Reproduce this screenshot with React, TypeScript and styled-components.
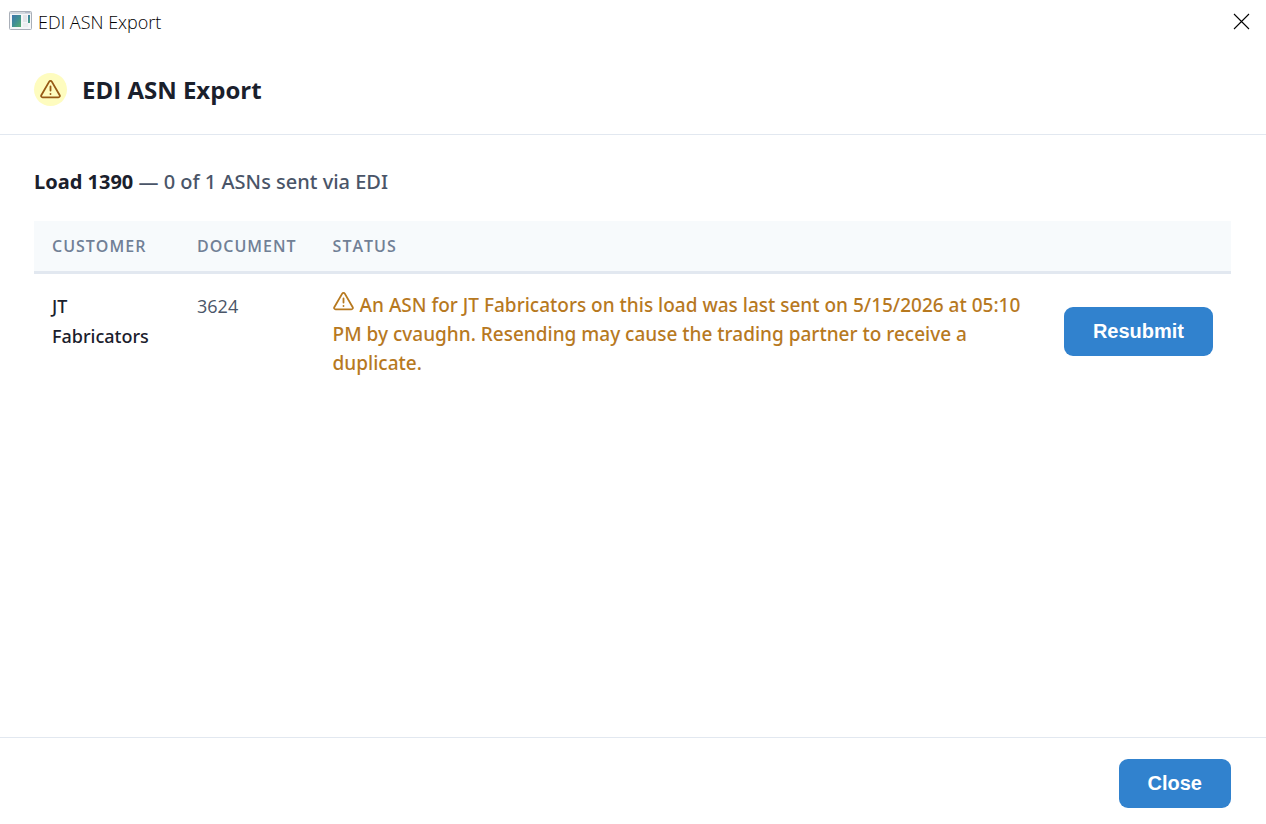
import React from "react";
import styled, { createGlobalStyle } from "styled-components";

const GlobalStyle = createGlobalStyle`
  * { box-sizing: border-box; }
  body {
    margin: 0;
    background: #ffffff;
    color: #1a202c;
    font-family: "Open Sans", "Noto Sans", sans-serif;
    font-size: 19px;
    line-height: 30px;
  }
`;

const Window = styled.div`
  display: flex;
  flex-direction: column;
  min-height: 100vh;
`;

const TitleBar = styled.header`
  display: flex;
  align-items: flex-start;
  justify-content: space-between;
  height: 45px;
  padding: 7px 16px 0 8px;
`;

const WindowTitle = styled.div`
  display: flex;
  align-items: flex-start;
  gap: 5px;
  color: #000000;
  font-size: 18px;
  font-weight: 300;

  svg { margin-top: 4px; }
`;

const WindowClose = styled.button`
  display: flex;
  padding: 6px 0;
  border: 0;
  background: none;
  color: #000000;
  cursor: pointer;
`;

const DialogHeader = styled.div`
  display: flex;
  align-items: center;
  gap: 15px;
  padding: 28px 34px;
  border-bottom: 1px solid #e2e8f0;
`;

const WarningBadge = styled.span`
  display: flex;
  align-items: center;
  justify-content: center;
  width: 33px;
  height: 33px;
  border-radius: 50%;
  background: #fefcbf;
  color: #975a16;
`;

const Heading = styled.h1`
  margin: 0;
  font-size: 24px;
  font-weight: 700;
  line-height: 33px;
`;

const Content = styled.main`
  flex: 1;
  padding: 32px 35px 32px 34px;
`;

const Summary = styled.p`
  margin: 0 0 24px;
  color: #4a5568;
  font-family: "Noto Sans", sans-serif;
  font-size: 20px;
  font-weight: 500;

  strong {
    color: #1a202c;
    font-weight: 700;
  }
`;

const AsnTable = styled.table`
  width: 100%;
  border-collapse: separate;
  border-spacing: 0;
`;

const HeadCell = styled.th<{ $width?: number }>`
  width: ${(p) => (p.$width ? `${p.$width}px` : "auto")};
  padding: 10px 18px;
  border-bottom: 3px solid #e2e8f0;
  background: #f7fafc;
  color: #718096;
  font-size: 16px;
  font-weight: 600;
  letter-spacing: 1px;
  text-align: left;
  text-transform: uppercase;
`;

const Cell = styled.td`
  padding: 17px 18px 10px;
  vertical-align: top;
`;

const CustomerCell = styled(Cell)`
  font-family: "Noto Sans", sans-serif;
  font-weight: 500;
  font-size: 18px;
`;

const DocumentCell = styled(Cell)`
  color: #4a5568;
  font-size: 18px;
`;

const StatusCell = styled(Cell)`
  color: #b7791f;
  font-family: "Noto Sans", sans-serif;
  font-weight: 500;
  line-height: 29px;
`;

const ActionCell = styled(Cell)`
  padding: 10px 18px;
  vertical-align: middle;
`;

const InlineIcon = styled.span`
  display: inline-block;
  height: 24px;
  margin-right: 6px;

  svg { vertical-align: 0; }
`;

const Button = styled.button`
  height: 49px;
  padding: 0 29px;
  border: 0;
  border-radius: 9px;
  background: #3182ce;
  color: #ffffff;
  font-family: "Liberation Sans", Arial, sans-serif;
  font-size: 20px;
  font-weight: 700;
  cursor: pointer;
`;

const Footer = styled.footer`
  display: flex;
  justify-content: flex-end;
  padding: 21px 35px 16px;
  border-top: 1px solid #e2e8f0;
`;

const Warning = () => (
  <svg width="21" height="21" viewBox="0 0 21 21" fill="none" stroke="currentColor" strokeWidth="1.8" strokeLinecap="round" strokeLinejoin="round" aria-hidden="true">
    <path d="M9.2 2.6 1.3 16.2a1.5 1.5 0 0 0 1.3 2.2h15.8a1.5 1.5 0 0 0 1.3-2.2L11.8 2.6a1.5 1.5 0 0 0-2.6 0Z" />
    <path d="M10.5 7.5v4M10.5 14.8v.2" />
  </svg>
);

const AppIcon = () => (
  <svg width="25" height="20" viewBox="0 0 25 20" aria-hidden="true">
    <defs>
      <linearGradient id="pane" x1="0" y1="0" x2="1" y2="1">
        <stop offset="0" stopColor="#3f74ad" />
        <stop offset="0.5" stopColor="#3f8f93" />
        <stop offset="1" stopColor="#58ad6c" />
      </linearGradient>
    </defs>
    <rect x="1.5" y="0.5" width="22" height="18" rx="1" fill="#f5f6f8" stroke="#a9afb8" />
    <path d="M2 2h21" stroke="#d4d9e0" strokeWidth="2" />
    <path d="M17 1.5h5" stroke="#b3bccb" />
    <rect x="4" y="4" width="9" height="12" fill="url(#pane)" />
    <rect x="15" y="4" width="4" height="7" fill="#e3e5e8" />
    <rect x="20" y="4" width="2" height="8" fill="url(#pane)" />
    <rect x="15" y="12" width="5" height="4" fill="#eceef0" />
  </svg>
);

export default function App() {
  return (
    <Window>
      <GlobalStyle />
      <TitleBar>
        <WindowTitle>
          <AppIcon />
          <span>EDI ASN Export</span>
        </WindowTitle>
        <WindowClose type="button" aria-label="Close window">
          <svg width="17" height="17" viewBox="0 0 17 17" stroke="currentColor" strokeWidth="1.1" aria-hidden="true">
            <path d="M1 1l15 15M16 1L1 16" />
          </svg>
        </WindowClose>
      </TitleBar>
      <DialogHeader>
        <WarningBadge><Warning /></WarningBadge>
        <Heading>EDI ASN Export</Heading>
      </DialogHeader>
      <Content>
        <Summary><strong>Load 1390</strong> — 0 of 1 ASNs sent via EDI</Summary>
        <AsnTable>
          <thead>
            <tr>
              <HeadCell $width={145}>Customer</HeadCell>
              <HeadCell $width={135}>Document</HeadCell>
              <HeadCell>Status</HeadCell>
              <HeadCell $width={185} aria-label="Action" />
            </tr>
          </thead>
          <tbody>
            <tr>
              <CustomerCell>JT Fabricators</CustomerCell>
              <DocumentCell>3624</DocumentCell>
              <StatusCell>
                <InlineIcon><Warning /></InlineIcon>
                An ASN for JT Fabricators on this load was last sent on 5/15/2026 at 05:10 PM by cvaughn. Resending may cause the trading partner to receive a duplicate.
              </StatusCell>
              <ActionCell><Button type="button">Resubmit</Button></ActionCell>
            </tr>
          </tbody>
        </AsnTable>
      </Content>
      <Footer>
        <Button type="button">Close</Button>
      </Footer>
    </Window>
  );
}
